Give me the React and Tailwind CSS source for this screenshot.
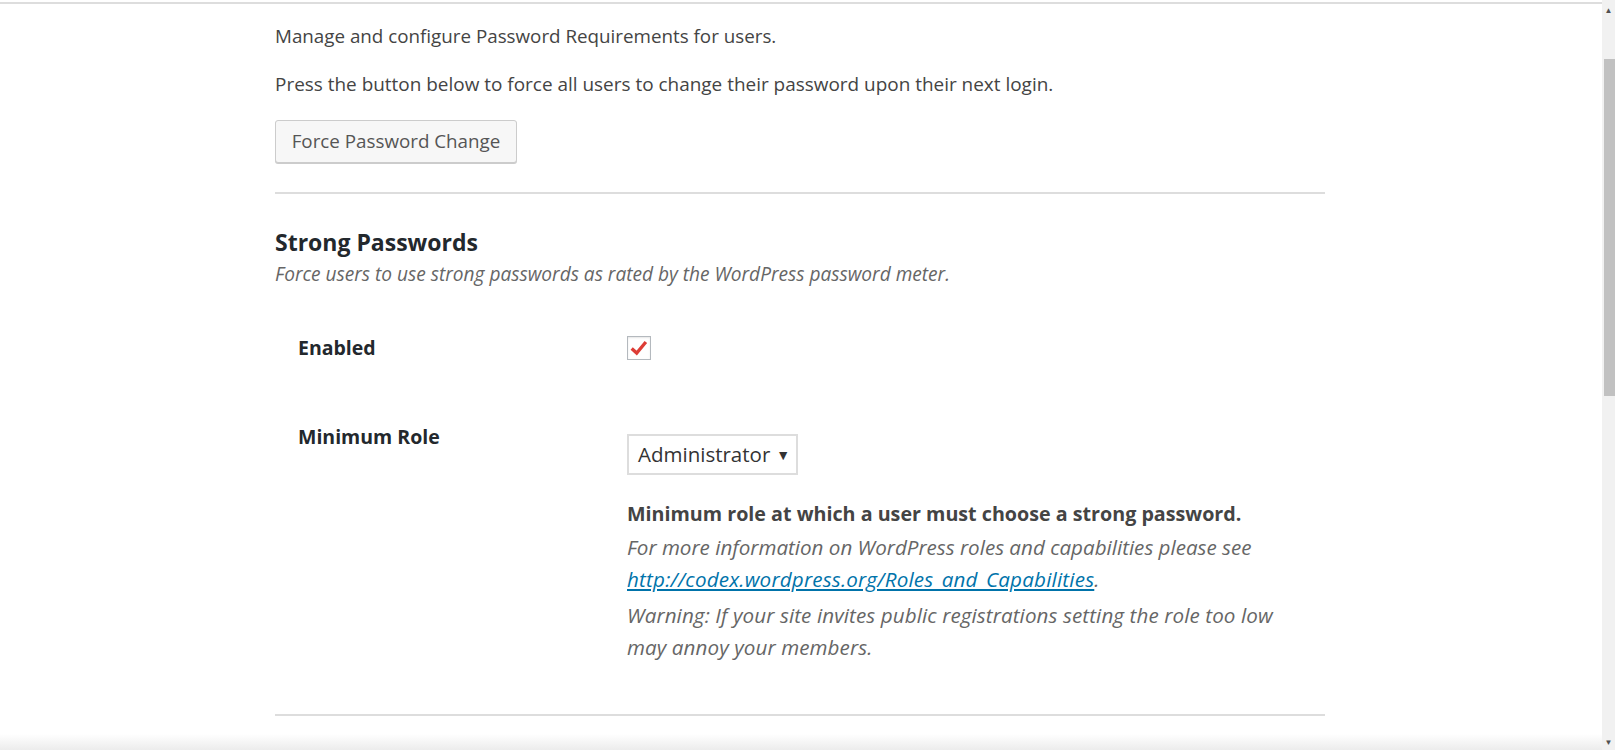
import React from 'react';

function Checkbox() {
  return (
    <span className="flex h-[24px] w-[24px] items-center justify-center border-[1.5px] border-[#b4b9be] bg-white shadow-[inset_0_1px_2px_rgba(0,0,0,0.1)]">
      <svg viewBox="0 0 24 24" className="h-[22px] w-[22px]">
        <path d="M4 12.5 L9.5 17.5 L19.5 5.5" fill="none" stroke="#dd3d36" strokeWidth="3.6" strokeLinejoin="miter" />
      </svg>
    </span>
  );
}

function Scrollbar() {
  return (
    <div className="flex w-[13px] flex-col items-center bg-[#f1f1f1]">
      <span className="mt-[6px] text-[8px] leading-none text-[#505050]">▲</span>
      <div className="mt-[45px] h-[337px] w-[11px] self-end bg-[#c1c1c1]" />
      <span className="mt-auto mb-[4px] text-[8px] leading-none text-[#505050]">▼</span>
    </div>
  );
}

export default function App() {
  return (
    <div className="relative flex h-[750px] overflow-hidden bg-white font-['Open_Sans',sans-serif] text-[18.8px] text-[#444]">
      <div className="flex-1">
        <div className="mt-[2px] h-[2px] bg-[#ddd]" />
        <div className="ml-[275px] w-[1050px]">
          <p className="mt-[18px] leading-[29px]">Manage and configure Password Requirements for users.</p>
          <p className="mt-[19px] text-[18.95px] leading-[29px]">
            Press the button below to force all users to change their password upon their next login.
          </p>
          <button className="mt-[21px] h-[43px] w-[242px] rounded-[3px] border border-[#ccc] bg-[#f7f7f7] text-[#555] shadow-[0_1px_0_#ccc]">
            Force Password Change
          </button>
          <div className="mt-[29px] h-[2px] bg-[#ddd]" />

          <h2 className="mt-[33px] text-[23px] font-bold leading-[30px] text-[#23282d]">Strong Passwords</h2>
          <p className="mt-[3px] text-[19.1px] italic leading-[29px] text-[#666]">
            Force users to use strong passwords as rated by the WordPress password meter.
          </p>

          <div className="mt-[43px] flex">
            <div className="w-[352px] pl-[23px] pt-[1px] text-[19.5px] font-bold leading-[29px] text-[#23282d]">Enabled</div>
            <div className="pt-[4px]">
              <Checkbox />
            </div>
          </div>

          <div className="mt-[60px] flex">
            <div className="w-[352px] pl-[23px] text-[19.5px] font-bold leading-[29px] text-[#23282d]">Minimum Role</div>
            <div className="pt-[12px]">
              <div className="flex h-[41px] w-[171px] items-center justify-between border-2 border-[#ddd] bg-white pl-[9px] pr-[6px] text-[20.5px] text-[#333]">
                <span>Administrator</span>
                <span className="text-[14px]">▼</span>
              </div>
              <div className="mt-[23px] leading-[32px]">
                <p className="text-[19.7px] font-bold">Minimum role at which a user must choose a strong password.</p>
                <p className="mt-[1px] w-[670px] text-[20.6px] italic text-[#666]">
                  For more information on WordPress roles and capabilities please see{' '}
                  <a href="#" className="tracking-[0.2px] text-[#0073aa] underline">
                    http://codex.wordpress.org/Roles_and_Capabilities
                  </a>
                  .
                </p>
                <p className="mt-[4px] w-[670px] text-[20.6px] italic tracking-[0.1px] text-[#666]">
                  Warning: If your site invites public registrations setting the role too low may annoy your members.
                </p>
              </div>
            </div>
          </div>

          <div className="mt-[51px] h-[2px] bg-[#ddd]" />
        </div>
      </div>

      <Scrollbar />

      <div className="pointer-events-none absolute bottom-0 left-0 right-[13px] h-[16px] bg-gradient-to-b from-white/0 to-[#ececec]" />
    </div>
  );
}
